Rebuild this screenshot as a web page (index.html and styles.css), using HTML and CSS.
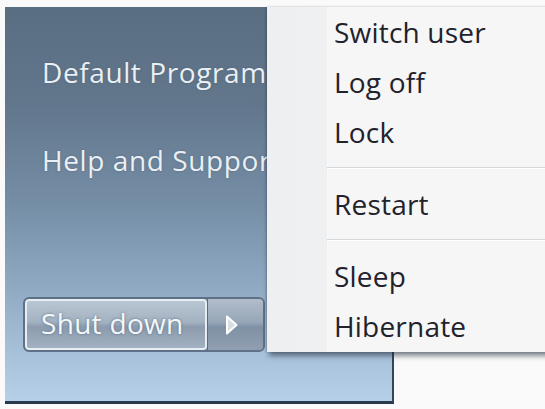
FILE: index.html
```html
<!DOCTYPE html>
<html>
<head>
<meta charset="utf-8">
<link rel="stylesheet" href="styles.css">
</head>
<body>
<div class="desk">
  <div class="startmenu">
    <div class="links">
      <div class="link">Default Programs</div>
      <div class="link">Help and Support</div>
    </div>
    <div class="power">
      <div class="btn-main">Shut down</div>
      <div class="btn-arrow">
        <svg width="16" height="22" viewBox="0 0 16 22"><path d="M3 2.5 L12.5 11 L3 19.5 Z" fill="#d6dde4" stroke="#ffffff" stroke-width="2" stroke-linejoin="round"/></svg>
      </div>
    </div>
  </div>
  <div class="popup">
    <div class="item">Switch user</div>
    <div class="item">Log off</div>
    <div class="item">Lock</div>
    <div class="sep"></div>
    <div class="item">Restart</div>
    <div class="sep"></div>
    <div class="item">Sleep</div>
    <div class="item">Hibernate</div>
  </div>
</div>
</body>
</html>
```
FILE: styles.css
```css
html, body {
  margin: 0;
  padding: 0;
  background: #fafafa;
  width: 545px;
  height: 409px;
  overflow: hidden;
  font-family: "Open Sans", "DejaVu Sans", sans-serif;
}
.desk {
  position: relative;
  width: 545px;
  height: 409px;
  padding: 7px 0 0 5px;
  box-sizing: border-box;
}
.startmenu {
  width: 389px;
  height: 397px;
  box-sizing: border-box;
  border-right: 2px solid #34465a;
  border-bottom: 3px solid #2a3a4c;
  background: linear-gradient(to bottom, #5a6e82 0%, #62778c 25%, #758ea6 50%, #8ea8c2 70%, #a7c1db 88%, #b6d0ea 100%);
  display: flex;
  flex-direction: column;
}
.links {
  padding: 42px 0 0 37px;
  display: flex;
  flex-direction: column;
  gap: 41px;
}
.link {
  color: #eaeff4;
  font-size: 28px;
  letter-spacing: 0.6px;
  line-height: 47px;
  white-space: nowrap;
  text-shadow: 0 0 2px rgba(60,80,100,0.5);
}
.power {
  margin: auto 0 49px 18px;
  display: flex;
  width: 242px;
  height: 55px;
  box-sizing: border-box;
  border: 2px solid #5f7186;
  border-radius: 6px;
  overflow: hidden;
  background: #7f91a5;
}
.btn-main {
  width: 182px;
  box-sizing: border-box;
  border: 2px solid #e6edf3;
  border-radius: 4px;
  background: linear-gradient(to bottom, #b9c6d3 0%, #a3b2c1 45%, #8c9cae 55%, #a2b1c1 100%);
  color: #f4f7fa;
  font-size: 28px;
  letter-spacing: 0.3px;
  line-height: 45px;
  padding-left: 14px;
  text-shadow: 0 0 3px rgba(70,90,110,0.7);
  white-space: nowrap;
}
.btn-arrow {
  flex: 1;
  display: flex;
  align-items: center;
  justify-content: center;
  padding-right: 8px;
  border-left: 1px solid #5b6c80;
  background: linear-gradient(to bottom, #b1bdca 0%, #97a7b8 45%, #7f91a5 55%, #909fb1 100%);
}
.popup {
  position: absolute;
  left: 267px;
  top: 7px;
  width: 290px;
  height: 345px;
  background: linear-gradient(to right, #edeff1 0px, #eef0f2 59px, #dfe1e3 59px, #fbfbfb 60px, #f6f6f6 61px);
  box-shadow: 2px 4px 5px rgba(30,40,55,0.55), -1px 0 2px rgba(30,40,55,0.25);
}
.item {
  height: 50px;
  line-height: 50px;
  padding-left: 67px;
  font-size: 28px;
  letter-spacing: 0.2px;
  color: #22222c;
  white-space: nowrap;
}
.sep {
  height: 22px;
  margin-left: 60px;
  box-sizing: border-box;
  padding-top: 10px;
}
.sep::before {
  content: "";
  display: block;
  height: 1px;
  background: #d6d7d9;
  border-bottom: 1px solid #ffffff;
}
```
